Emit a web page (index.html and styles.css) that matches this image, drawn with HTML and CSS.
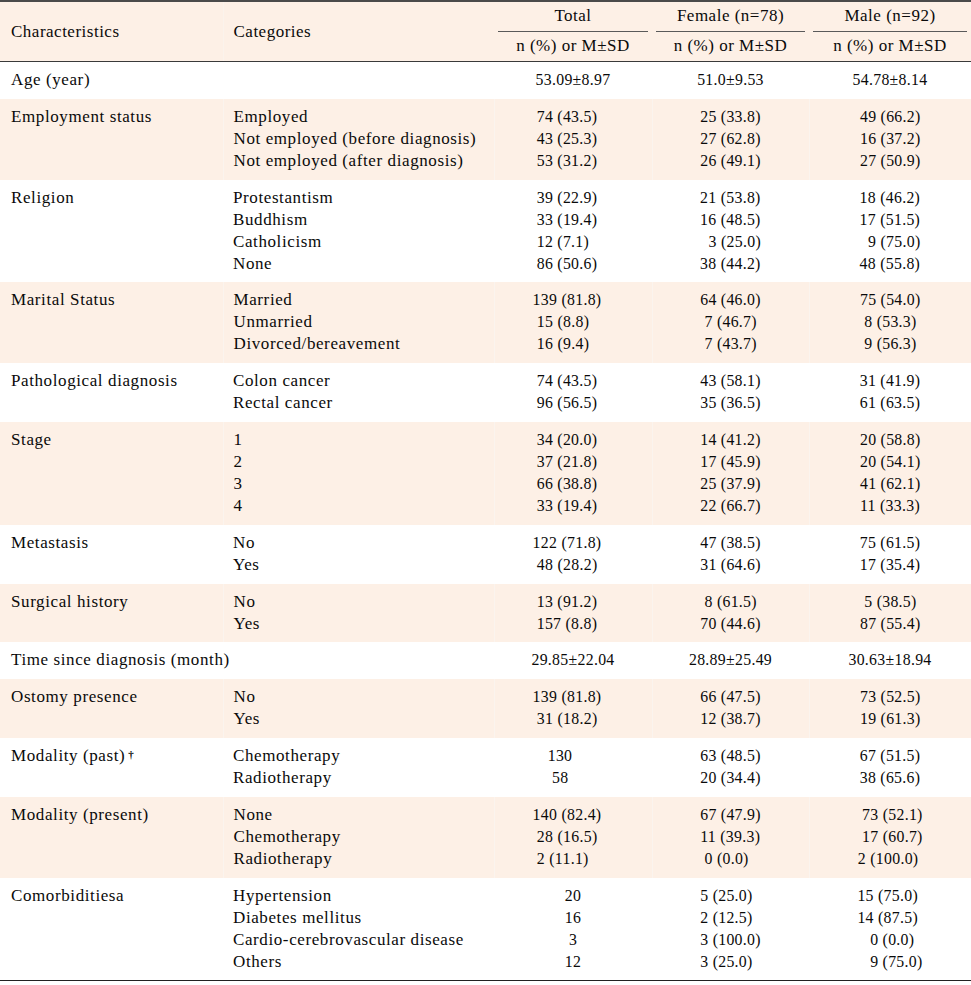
FILE: index.html
```html
<!DOCTYPE html>
<html lang="en">
<head>
<meta charset="utf-8">
<title>Characteristics table</title>
<link rel="stylesheet" href="styles.css">
</head>
<body>
<table class="tbl">
  <colgroup>
    <col class="c1"><col class="c2"><col class="c3"><col class="c4"><col class="c5">
  </colgroup>
  <thead>
    <tr class="h1">
      <th class="lab" rowspan="2">Characteristics</th>
      <th class="lab" rowspan="2">Categories</th>
      <th class="grp"><div class="ul">Total</div></th>
      <th class="grp"><div class="ul">Female (n=78)</div></th>
      <th class="grp"><div class="ul">Male (n=92)</div></th>
    </tr>
    <tr class="h2">
      <th class="sub">n (%) or M±SD</th>
      <th class="sub">n (%) or M±SD</th>
      <th class="sub">n (%) or M±SD</th>
    </tr>
  </thead>
  <tbody>
    <tr>
      <td class="t">Age (year)</td><td class="t"></td>
      <td class="n"><span class="b">53.09±8.97</span></td>
      <td class="n"><span class="b">51.0±9.53</span></td>
      <td class="n"><span class="b">54.78±8.14</span></td>
    </tr>
    <tr class="alt">
      <td class="t">Employment status</td>
      <td class="t">Employed<br>Not employed (before diagnosis)<br>Not employed (after diagnosis)</td>
      <td class="n tot"><span class="b">74 (43.5)
43 (25.3)
53 (31.2)</span></td>
      <td class="n"><span class="b">25 (33.8)
27 (62.8)
26 (49.1)</span></td>
      <td class="n"><span class="b">49 (66.2)
16 (37.2)
27 (50.9)</span></td>
    </tr>
    <tr>
      <td class="t">Religion</td>
      <td class="t">Protestantism<br>Buddhism<br>Catholicism<br>None</td>
      <td class="n tot"><span class="b">39 (22.9)
33 (19.4)
12 (7.1)
86 (50.6)</span></td>
      <td class="n"><span class="b">21 (53.8)
16 (48.5)
  3 (25.0)
38 (44.2)</span></td>
      <td class="n"><span class="b">18 (46.2)
17 (51.5)
  9 (75.0)
48 (55.8)</span></td>
    </tr>
    <tr class="alt">
      <td class="t">Marital Status</td>
      <td class="t">Married<br>Unmarried<br>Divorced/bereavement</td>
      <td class="n tot"><span class="b">139 (81.8)
 15 (8.8)
 16 (9.4)</span></td>
      <td class="n"><span class="b">64 (46.0)
 7 (46.7)
 7 (43.7)</span></td>
      <td class="n"><span class="b">75 (54.0)
 8 (53.3)
 9 (56.3)</span></td>
    </tr>
    <tr>
      <td class="t">Pathological diagnosis</td>
      <td class="t">Colon cancer<br>Rectal cancer</td>
      <td class="n tot"><span class="b">74 (43.5)
96 (56.5)</span></td>
      <td class="n"><span class="b">43 (58.1)
35 (36.5)</span></td>
      <td class="n"><span class="b">31 (41.9)
61 (63.5)</span></td>
    </tr>
    <tr class="alt">
      <td class="t">Stage</td>
      <td class="t">1<br>2<br>3<br>4</td>
      <td class="n tot"><span class="b">34 (20.0)
37 (21.8)
66 (38.8)
33 (19.4)</span></td>
      <td class="n"><span class="b">14 (41.2)
17 (45.9)
25 (37.9)
22 (66.7)</span></td>
      <td class="n"><span class="b">20 (58.8)
20 (54.1)
41 (62.1)
11 (33.3)</span></td>
    </tr>
    <tr>
      <td class="t">Metastasis</td>
      <td class="t">No<br>Yes</td>
      <td class="n tot"><span class="b">122 (71.8)
 48 (28.2)</span></td>
      <td class="n"><span class="b">47 (38.5)
31 (64.6)</span></td>
      <td class="n"><span class="b">75 (61.5)
17 (35.4)</span></td>
    </tr>
    <tr class="alt">
      <td class="t">Surgical history</td>
      <td class="t">No<br>Yes</td>
      <td class="n tot"><span class="b">13 (91.2)
157 (8.8)</span></td>
      <td class="n"><span class="b"> 8 (61.5)
70 (44.6)</span></td>
      <td class="n"><span class="b"> 5 (38.5)
87 (55.4)</span></td>
    </tr>
    <tr>
      <td class="t" colspan="2">Time since diagnosis (month)</td>
      <td class="n"><span class="b">29.85±22.04</span></td>
      <td class="n"><span class="b">28.89±25.49</span></td>
      <td class="n"><span class="b">30.63±18.94</span></td>
    </tr>
    <tr class="alt">
      <td class="t">Ostomy presence</td>
      <td class="t">No<br>Yes</td>
      <td class="n tot"><span class="b">139 (81.8)
 31 (18.2)</span></td>
      <td class="n"><span class="b">66 (47.5)
12 (38.7)</span></td>
      <td class="n"><span class="b">73 (52.5)
19 (61.3)</span></td>
    </tr>
    <tr>
      <td class="t">Modality (past)<sup class="dg">†</sup></td>
      <td class="t">Chemotherapy<br>Radiotherapy</td>
      <td class="n tot2"><span class="b">130
 58</span></td>
      <td class="n"><span class="b">63 (48.5)
20 (34.4)</span></td>
      <td class="n"><span class="b">67 (51.5)
38 (65.6)</span></td>
    </tr>
    <tr class="alt">
      <td class="t">Modality (present)</td>
      <td class="t">None<br>Chemotherapy<br>Radiotherapy</td>
      <td class="n tot"><span class="b">140 (82.4)
 28 (16.5)
 2 (11.1)</span></td>
      <td class="n"><span class="b">67 (47.9)
11 (39.3)
 0 (0.0)</span></td>
      <td class="n"><span class="b"> 73 (52.1)
 17 (60.7)
2 (100.0)</span></td>
    </tr>
    <tr class="last">
      <td class="t">Comorbiditiesa</td>
      <td class="t">Hypertension<br>Diabetes mellitus<br>Cardio-cerebrovascular disease<br>Others</td>
      <td class="n"><span class="b">20
16
 3
12</span></td>
      <td class="n"><span class="b">5 (25.0)
2 (12.5)
3 (100.0)
3 (25.0)</span></td>
      <td class="n"><span class="b">15 (75.0)
14 (87.5)
   0 (0.0)
   9 (75.0)</span></td>
    </tr>
  </tbody>
</table>
</body>
</html>
```

FILE: styles.css
```css
html, body {
  margin: 0;
  padding: 0;
  background: #ffffff;
}

body {
  font-family: "Liberation Serif", "Times New Roman", serif;
  font-size: 17px;
  color: #0a0a0a;
}

.tbl {
  width: 971px;
  border-collapse: collapse;
  table-layout: fixed;
  border-top: 2px solid #4a4a4a;
  border-bottom: 1px solid #222222;
}

.c1 { width: 223px; }
.c2 { width: 271px; }
.c3 { width: 158px; }
.c4 { width: 157px; }
.c5 { width: 162px; }

thead th {
  background: #fdf0e6;
  font-weight: normal;
  letter-spacing: 0.5px;
}

thead tr.h2 th {
  border-bottom: 1px solid #3a3a3a;
}

th.lab {
  text-align: left;
  padding: 0 10px;
  height: 59px;
  border-bottom: 1px solid #3a3a3a;
  border-left: 1px solid #fbf3ec;
}

th.lab:first-child {
  border-left: none;
  padding-left: 11px;
}

th.grp {
  padding: 0 4px;
  height: 29px;
  vertical-align: bottom;
}

.ul {
  border-bottom: 1px solid #5a5a5a;
  line-height: 20px;
  padding-bottom: 5px;
}

th.sub {
  height: 29px;
  padding: 0 4px;
  line-height: 20px;
}

td {
  vertical-align: top;
  padding: 7px 10px 7.8px;
  line-height: 22px;
}

td:first-child {
  padding-left: 11px;
}

tr.alt td {
  background: #fdf0e6;
}

tr.alt td + td {
  border-left: 1px solid #fbf4ee;
}

td.t {
  letter-spacing: 0.6px;
}

td.n {
  text-align: center;
  font-size: 15.8px;
  letter-spacing: 0.3px;
  padding-left: 4px;
  padding-right: 4px;
}

td.n.tot {
  padding-left: 0;
  padding-right: 12px;
}

td.n.tot2 {
  padding-left: 0;
  padding-right: 26px;
}

.b {
  display: inline-block;
  text-align: left;
  white-space: pre;
}

.dg {
  font-size: 11px;
  font-weight: bold;
  vertical-align: top;
  position: relative;
  top: -2px;
  margin-left: 3px;
}
```
